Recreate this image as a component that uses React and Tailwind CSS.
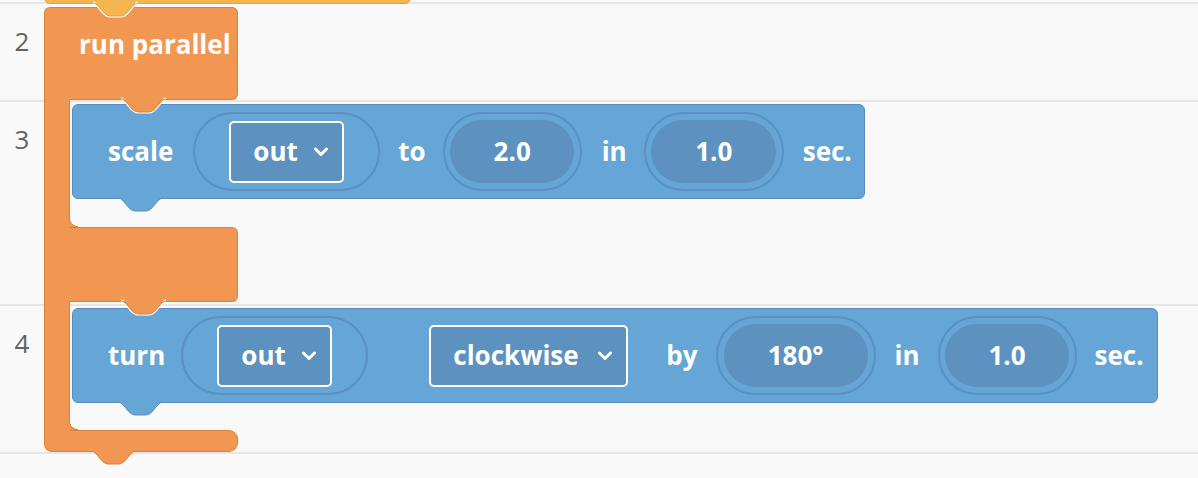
import React from "react";

const TAB_D = "M0 0 C6 0 10 13 17 13 L28 13 C35 13 39 0 45 0";

function Tab({ fill, stroke, gap, className }) {
  return (
    <svg
      width="45"
      height="14"
      viewBox="0 0 45 14"
      className={`absolute z-10 overflow-visible ${className}`}
    >
      {gap && <path d={TAB_D} fill="none" stroke="#ffffff" strokeWidth="3.2" />}
      <path d={TAB_D + " Z"} fill={fill} />
      <path d={TAB_D} fill="none" stroke={stroke} strokeWidth="1" />
    </svg>
  );
}

function Chevron() {
  return (
    <svg width="16" height="10" viewBox="0 0 16 10" className="shrink-0">
      <polyline
        points="2.5,2 8,7.5 13.5,2"
        fill="none"
        stroke="#ffffff"
        strokeWidth="3"
        strokeLinecap="round"
        strokeLinejoin="round"
      />
    </svg>
  );
}

function Dropdown({ label, w }) {
  return (
    <div
      className={`flex h-[62px] items-center rounded-[5px] border-2 border-white bg-[#5d91c0] pl-[22px] pr-[13px] ${w}`}
    >
      <span>{label}</span>
      <span className="ml-auto">
        <Chevron />
      </span>
    </div>
  );
}

function Ring({ w, className = "", children }) {
  return (
    <div
      className={`flex h-[79px] shrink-0 items-center justify-center rounded-full border-2 border-[#5b90c1] ${w} ${className}`}
    >
      {children}
    </div>
  );
}

function Value({ w, children }) {
  return (
    <div
      className={`flex h-[63px] items-center justify-center rounded-full bg-[#5d91c0] ${w}`}
    >
      {children}
    </div>
  );
}

function BlueBlock({ children, className = "" }) {
  return (
    <div
      className={`relative flex h-[95px] w-fit items-center rounded-[6px] border border-[#5a8dbf] bg-[#66a6d6] pl-[35px] text-white ${className}`}
    >
      {children}
      <Tab fill="#66a6d6" stroke="#5a8dbf" className="left-[45px] top-full" />
    </div>
  );
}

function InnerCorner() {
  return (
    <div className="absolute bottom-[-1px] left-[24px] h-[10px] w-[10px] bg-[radial-gradient(circle_at_100%_0%,transparent_8px,#d9823f_8px,#d9823f_9px,#f29752_9px)]" />
  );
}

const ORANGE = "bg-[#f29752]";
const ORANGE_B = "border-[#d9823f]";

function Row({ h, num }) {
  return (
    <div className={`flex border-b-2 border-[#e6e6e6] ${h}`}>
      {num && (
        <div className="w-[44px] pt-[18px] text-center text-[26px] font-medium text-[#636363] [font-family:'Open_Sans',sans-serif]">
          {num}
        </div>
      )}
    </div>
  );
}

export default function App() {
  return (
    <div className="relative h-[478px] w-[1198px] overflow-hidden bg-[#f9f9f9] [font-family:'Open_Sans',sans-serif]">
      <div className="flex flex-col">
        <Row h="h-[4px]" />
        <Row h="h-[98px]" num="2" />
        <Row h="h-[204px]" num="3" />
        <Row h="h-[148px]" num="4" />
      </div>

      <div className="absolute left-[44px] top-[-10px] flex flex-col text-[26px] font-bold text-white">
        {/* yellow block above */}
        <div className="relative h-[14px] w-[367px] rounded-b-[6px] border border-[#e0a243] bg-[#f5b64f]">
          <Tab fill="#f5b64f" stroke="#e0a243" gap className="left-[48px] top-full" />
        </div>

        {/* run parallel C block */}
        <div className="mt-[3px] flex flex-col">
          {/* top bar */}
          <div className="flex h-[93px]">
            <div className={`w-[26px] rounded-tl-[6px] border-l border-t ${ORANGE_B} ${ORANGE}`} />
            <div
              className={`relative w-[168px] rounded-r-[6px] border-b border-r border-t pl-[9px] pt-[17px] ${ORANGE_B} ${ORANGE}`}
            >
              run parallel
              <Tab fill="#f29752" stroke="#d9823f" gap className="left-[51px] top-full" />
            </div>
          </div>

          {/* slot 1 */}
          <div className="relative flex">
            <div className={`w-[26px] shrink-0 border-x ${ORANGE_B} ${ORANGE}`} />
            <div className="ml-[2px] pb-[28px] pt-[4px]">
              <BlueBlock className="pr-[12px]">
                <span>scale</span>
                <Ring w="w-[187px]" className="ml-[20px]">
                  <Dropdown label="out" w="w-[115px]" />
                </Ring>
                <span className="ml-[18px]">to</span>
                <Ring w="w-[139px]" className="ml-[17px]">
                  <Value w="w-[124px]">2.0</Value>
                </Ring>
                <span className="ml-[20px]">in</span>
                <Ring w="w-[140px]" className="ml-[17px]">
                  <Value w="w-[125px]">1.0</Value>
                </Ring>
                <span className="ml-[19px]">sec.</span>
              </BlueBlock>
            </div>
            <InnerCorner />
          </div>

          {/* middle bar */}
          <div className="flex h-[75px]">
            <div className={`w-[26px] border-l ${ORANGE_B} ${ORANGE}`} />
            <div className={`relative w-[168px] rounded-r-[6px] border-b border-r border-t ${ORANGE_B} ${ORANGE}`}>
              <Tab fill="#f29752" stroke="#d9823f" gap className="left-[51px] top-full" />
            </div>
          </div>

          {/* slot 2 */}
          <div className="relative flex">
            <div className={`w-[26px] shrink-0 border-x ${ORANGE_B} ${ORANGE}`} />
            <div className="ml-[2px] pb-[27px] pt-[6px]">
              <BlueBlock className="pr-[13px]">
                <span>turn</span>
                <Ring w="w-[187px]" className="ml-[16px]">
                  <Dropdown label="out" w="w-[115px]" />
                </Ring>
                <div className="ml-[61px]">
                  <Dropdown label="clockwise" w="w-[199px]" />
                </div>
                <span className="ml-[38px]">by</span>
                <Ring w="w-[160px]" className="ml-[18px]">
                  <Value w="w-[144px]">180°</Value>
                </Ring>
                <span className="ml-[19px]">in</span>
                <Ring w="w-[139px]" className="ml-[18px]">
                  <Value w="w-[124px]">1.0</Value>
                </Ring>
                <span className="ml-[18px]">sec.</span>
              </BlueBlock>
            </div>
            <InnerCorner />
          </div>

          {/* bottom bar */}
          <div className="relative flex h-[22px]">
            <div className={`w-[26px] rounded-bl-[8px] border-b border-l ${ORANGE_B} ${ORANGE}`} />
            <div className={`w-[168px] rounded-r-[9px] border-b border-r border-t ${ORANGE_B} ${ORANGE}`} />
            <Tab fill="#f29752" stroke="#d9823f" className="left-[47px] top-[21px]" />
          </div>
        </div>
      </div>
    </div>
  );
}
